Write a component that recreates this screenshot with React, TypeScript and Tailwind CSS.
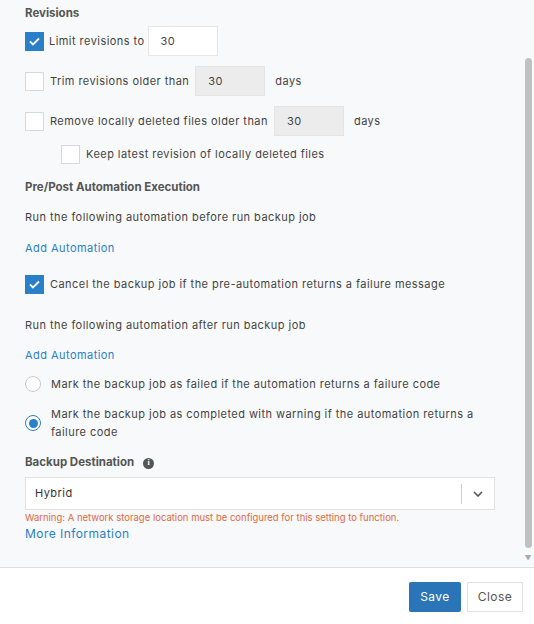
import React from "react";

const Check = ({ on }: { on?: boolean }) =>
  on ? (
    <div className="w-[19px] h-[19px] bg-[#2a7fc9] flex items-center justify-center shrink-0">
      <svg width="11" height="9" viewBox="0 0 11 9"><path d="M1 4.5l3 3L10 1.5" stroke="white" strokeWidth="1.8" fill="none" /></svg>
    </div>
  ) : (
    <div className="w-[19px] h-[19px] bg-white border border-[#d6d8db] shrink-0" />
  );

const Num = ({ dis }: { dis?: boolean }) => (
  <div className={`h-[30px] w-[70px] flex items-center px-[12px] text-[11px] border ${dis ? "bg-[#ececec] border-[#e4e4e4]" : "bg-white border-[#e6e6e6]"}`}>30</div>
);

export default function App() {
  return (
    <div className="w-[534px] h-[624px] bg-white text-[#444] flex flex-col tracking-[0.45px]" style={{ fontFamily: "Inter, 'Noto Sans', sans-serif" }}>
      <div className="relative h-[568px] bg-[#f8f9fa] border-b border-[#dedede] pl-[25px] pt-[5px] text-[11px]">
        <div className="absolute right-[2px] top-[58px] w-[7px] h-[490px] rounded bg-[#c1c1c1]" />
        <div className="absolute right-[2px] top-[554px] text-[7px] text-[#aaa]">▼</div>
        <div className="font-bold text-[11.5px] text-[#555] h-[16px] tracking-normal">Revisions</div>
        <div className="flex items-center gap-[5px] mt-[5px] h-[30px]"><Check on /><span>Limit revisions to</span><div className="ml-[-2px]"><Num /></div></div>
        <div className="flex items-center mt-[10px] h-[30px]"><Check /><span className="ml-[6px] mr-[6px]">Trim revisions older than</span><Num dis /><span className="ml-[10px]">days</span></div>
        <div className="flex items-center mt-[10px] h-[30px]"><Check /><span className="ml-[6px] mr-[6px]">Remove locally deleted files older than</span><Num dis /><span className="ml-[10px]">days</span></div>
        <div className="flex items-center mt-[8px] ml-[36px] h-[20px]"><Check /><span className="ml-[6px]">Keep latest revision of locally deleted files</span></div>
        <div className="font-bold text-[11.5px] text-[#555] mt-[15px] h-[16px] tracking-normal">Pre/Post Automation Execution</div>
        <div className="mt-[14px] h-[16px]">Run the following automation before run backup job</div>
        <div className="mt-[15px] h-[16px] text-[#2a7fc9]">Add Automation</div>
        <div className="flex items-center gap-[6px] mt-[18px] h-[20px]"><Check on /><span>Cancel the backup job if the pre-automation returns a failure message</span></div>
        <div className="mt-[23px] h-[16px]">Run the following automation after run backup job</div>
        <div className="mt-[14px] h-[16px] text-[#2a7fc9]">Add Automation</div>
        <div className="flex items-center gap-[10px] mt-[13px] h-[16px]">
          <div className="w-[16px] h-[16px] rounded-full border border-[#c8c8c8] bg-white" />
          <span>Mark the backup job as failed if the automation returns a failure code</span>
        </div>
        <div className="flex items-center gap-[10px] mt-[13px]">
          <div className="w-[16px] h-[16px] rounded-full border border-[#2a7fc9] bg-white flex items-center justify-center shrink-0"><div className="w-[9px] h-[9px] rounded-full bg-[#2a7fc9]" /></div>
          <span className="leading-[18px] w-[440px]">Mark the backup job as completed with warning if the automation returns a failure code</span>
        </div>
        <div className="flex items-center gap-[9px] mt-[14px] h-[16px] font-bold text-[11.5px] text-[#555] tracking-normal">Backup Destination
          <div className="w-[11px] h-[11px] rounded-full bg-[#555] text-white text-[8px] flex items-center justify-center font-bold" style={{ fontFamily: "serif" }}>i</div>
        </div>
        <div className="mt-[6px] w-[470px] h-[33px] bg-white border border-[#e2e2e2] flex items-center">
          <span className="flex-1 pl-[9px] text-[#333]">Hybrid</span>
          <div className="w-px h-[20px] bg-[#ccc]" />
          <svg className="mx-[11px]" width="10" height="6" viewBox="0 0 10 6"><path d="M1 1l4 4 4-4" stroke="#555" strokeWidth="1.6" fill="none" /></svg>
        </div>
        <div className="mt-[1px] text-[9.5px] text-[#e2673f] h-[13px] tracking-normal">Warning: A network storage location must be configured for this setting to function.</div>
        <div className="mt-[1px] text-[12px] text-[#2a7fc9]">More Information</div>
      </div>
      <div className="flex justify-end items-start gap-[6px] pt-[14px] pr-[11px] text-[12px]">
        <div className="w-[52px] h-[30px] bg-[#2a74b8] text-white rounded-[2px] flex items-center justify-center">Save</div>
        <div className="w-[56px] h-[30px] bg-white border border-[#e2e2e2] text-[#555] flex items-center justify-center">Close</div>
      </div>
    </div>
  );
}
